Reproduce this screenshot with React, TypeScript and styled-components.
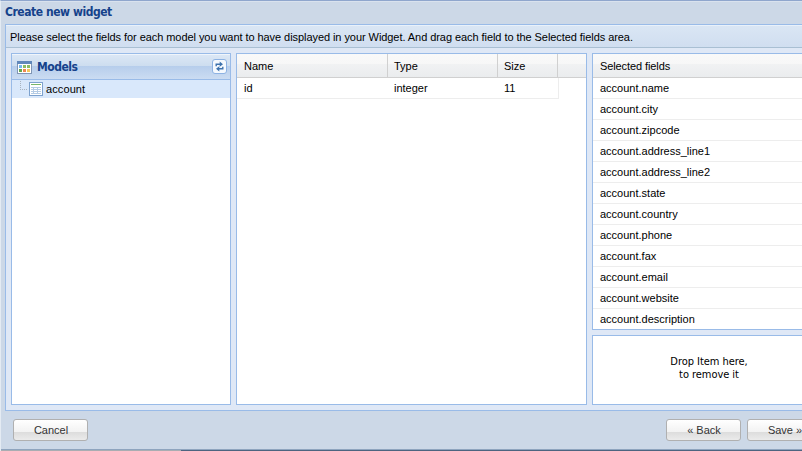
import React from 'react';
import styled, { createGlobalStyle } from 'styled-components';

const Global = createGlobalStyle`
  * { box-sizing: border-box; }
  html, body { margin: 0; width: 802px; height: 451px; overflow: hidden; }
  body { font: 11px/13px "Liberation Sans", Arial, sans-serif; color: #000; background: #ccd9e8; }
`;

const Window = styled.div`
  width: 802px; height: 451px; overflow: hidden;
  display: flex; flex-direction: column;
  border-top: 1px solid #8fa6cd;
  border-left: 1px solid #e4ebf3;
  background: #ccd8e7;
`;
const TitleBar = styled.header`
  height: 23px; flex: none;
  padding: 4px 0 0 4px;
  border-top: 1px solid #d9e2ee;
  font: bold 12px/13px "DejaVu Sans Condensed", "DejaVu Sans", Tahoma, sans-serif;
  letter-spacing: -0.45px;
  color: #15428b;
  white-space: nowrap;
`;
const Content = styled.main`
  width: 820px; height: 387px; flex: none;
  margin-left: 4px;
  border: 1px solid #99bbe8;
  background: #dfe8f6;
`;
const Message = styled.div`
  height: 23px;
  padding: 5px 0 0 4px;
  border-top: 1px solid #e9f1fa;
  border-bottom: 1px solid #a9bfd3;
  background: linear-gradient(#dae6f4, #d0def0);
  white-space: nowrap;
  letter-spacing: -0.062px;
`;
const Columns = styled.div`
  display: grid;
  grid-template-columns: 220px 351px 232px;
  gap: 5px;
  height: 352px;
  margin: 5px 0 0 5px;
`;
const Panel = styled.section`
  border: 1px solid #99bbe8;
  background: #fff;
  overflow: hidden;
  min-width: 0;
`;
const RightColumn = styled.div`
  display: grid;
  grid-template-rows: 277px 70px;
  gap: 5px;
  min-width: 0;
`;
const PanelHeader = styled.div`
  display: flex; align-items: center;
  height: 26px;
  padding: 0 3px 0 5px;
  border-top: 1px solid #f0f5fb;
  border-bottom: 1px solid #99bbe8;
  background: linear-gradient(#dbe7f5 0, #cdddef 11px, #b6cdeb 11px, #cbdcf2 100%);
`;
const PanelTitle = styled.h2`
  flex: 1; margin: 0 0 0 4px;
  font: bold 12px/13px "DejaVu Sans Condensed", "DejaVu Sans", Tahoma, sans-serif;
  letter-spacing: -0.5px;
  color: #15428b;
`;
const TreeRow = styled.div`
  display: flex; align-items: center;
  height: 18px; padding-left: 8px;
  background: #d9e8fb;
`;
const TreeLabel = styled.span` margin-left: 2px; letter-spacing: 0.1px; `;
const GridRow = styled.div<{ $head?: boolean }>`
  display: flex;
  width: ${p => (p.$head ? 'auto' : '322px')};
  height: ${p => (p.$head ? 24 : 21)}px;
  border-bottom: 1px solid ${p => (p.$head ? '#d0d0d0' : '#ededed')};
  border-right: ${p => (p.$head ? 'none' : '1px solid #ededed')};
  background: ${p => (p.$head ? 'linear-gradient(#f9f9f9 0, #f7f7f7 10px, #f1f2f3 10px, #eaecee 100%)' : '#fff')};
`;
const Cell = styled.div<{ $w: number; $head?: boolean; $first?: boolean }>`
  width: ${p => p.$w}px; flex: none;
  padding: ${p => (p.$head ? '6px' : '4px')} 0 0 ${p => (p.$first ? 7 : 6)}px;
  border-right: 1px solid ${p => (p.$head ? '#d0d0d0' : 'transparent')};
`;
const FieldHeader = styled.div`
  height: 24px; padding: 6px 0 0 7px;
  border-bottom: 1px solid #d0d0d0;
  background: linear-gradient(#f9f9f9 0, #f7f7f7 10px, #f1f2f3 10px, #eaecee 100%);
  letter-spacing: -0.1px;
`;
const Field = styled.div`
  height: 21px; padding: 4px 0 0 7px;
  border-bottom: 1px solid #ededed;
`;
const DropZone = styled(Panel)`
  padding: 19px 0 0 2px;
  text-align: center;
  font: 11px/13px "DejaVu Sans Condensed", "DejaVu Sans", Tahoma, sans-serif;
  letter-spacing: -0.05px;
`;
const Footer = styled.footer`
  display: flex;
  width: 821px; height: 38px; flex: none;
  padding: 8px 0 0 12px;
`;
const Spacer = styled.div` width: 572px; flex: none; `;
const Button = styled.button`
  width: 75px; height: 22px; flex: none;
  margin-right: 6px; padding: 1px 0 0 1px;
  border: 1px solid #b0b0b0; border-radius: 3px;
  background: linear-gradient(#fff 0, #f2f2f2 12px, #dcdcdc 12px, #ebebeb 100%);
  font: 11px/13px "Liberation Sans", Arial, sans-serif;
  color: #333;
  white-space: nowrap;
`;
const BottomEdge = styled.div`
  height: 2px; flex: none; margin-left: -1px;
  border-top: 1px solid #8ea4be;
  background: linear-gradient(90deg, #a9adb2 0 181px, #4d6480 181px);
`;
const Refresh = styled.button`
  display: flex; align-items: center; justify-content: center;
  width: 15px; height: 15px; padding: 0; margin-bottom: 2px;
  border: 1px solid #8db2e3; border-radius: 3px;
  background: #f5f9fe;
`;

const ModelsIcon = () => (
  <svg width="16" height="16" viewBox="0 -1 16 16">
    <rect x="0.5" y="1.5" width="14" height="12" fill="#fff" stroke="#8096b5" />
    <path d="M0 1h15v3H0z" fill="#6088bb" />
    <path d="M2 5h3v3H2z" fill="#75b9ee" /><path d="M6 5h3v3H6z" fill="#8bbd65" /><path d="M10 5h3v3h-3z" fill="#8bbd65" />
    <path d="M2 9h3v3H2z" fill="#65a94f" /><path d="M6 9h3v3H6z" fill="#ee8651" /><path d="M10 9h3v3h-3z" fill="#f5c65d" />
  </svg>
);
const TableIcon = () => (
  <svg width="16" height="16" viewBox="-1 0 16 16">
    <rect x="0.5" y="1.5" width="13" height="13" fill="#fff" stroke="#7da2ce" />
    <path d="M2 3h10v1H2z" fill="#78b66b" />
    <path d="M2 6.5h10M2 8.5h10M2 10.5h10M2 12.5h10M4.5 6v7M8.5 6v7" stroke="#b3cbe5" />
  </svg>
);
const Elbow = () => (
  <svg width="8" height="18" viewBox="0 0 8 18">
    <path d="M0.5 1v9M0 9.5h7" fill="none" stroke="#a8b3bf" strokeDasharray="1 1" />
  </svg>
);
const RefreshIcon = () => (
  <svg width="11" height="11" viewBox="0 0 11 11" fill="none" stroke="#3e72ad" strokeWidth="1.4">
    <path d="M2.2 5.2V3.2h4M8.8 5.8v2h-4" />
    <path d="M5.7 0.6l3.3 2.6-3.3 2.6zM5.3 5.2L2 7.8l3.3 2.6z" fill="#3e72ad" stroke="none" />
  </svg>
);

const fields = ['name', 'city', 'zipcode', 'address_line1', 'address_line2', 'state', 'country', 'phone', 'fax', 'email', 'website', 'description'];

export default function App() {
  return (
    <>
      <Global />
      <Window>
        <TitleBar>Create new widget</TitleBar>
        <Content>
          <Message>Please select the fields for each model you want to have displayed in your Widget. And drag each field to the Selected fields area.</Message>
          <Columns>
            <Panel>
              <PanelHeader>
                <ModelsIcon />
                <PanelTitle>Models</PanelTitle>
                <Refresh aria-label="Refresh"><RefreshIcon /></Refresh>
              </PanelHeader>
              <TreeRow><Elbow /><TableIcon /><TreeLabel>account</TreeLabel></TreeRow>
            </Panel>
            <Panel>
              <GridRow $head>
                <Cell $w={151} $head $first>Name</Cell><Cell $w={110} $head>Type</Cell><Cell $w={60} $head>Size</Cell>
              </GridRow>
              <GridRow><Cell $w={151} $first>id</Cell><Cell $w={110}>integer</Cell><Cell $w={60}>11</Cell></GridRow>
            </Panel>
            <RightColumn>
              <Panel>
                <FieldHeader>Selected fields</FieldHeader>
                {fields.map(f => <Field key={f}>account.{f}</Field>)}
              </Panel>
              <DropZone>Drop Item here,<br />to remove it</DropZone>
            </RightColumn>
          </Columns>
        </Content>
        <Footer>
          <Button>Cancel</Button><Spacer /><Button>« Back</Button><Button>Save »</Button>
        </Footer>
        <BottomEdge />
      </Window>
    </>
  );
}
